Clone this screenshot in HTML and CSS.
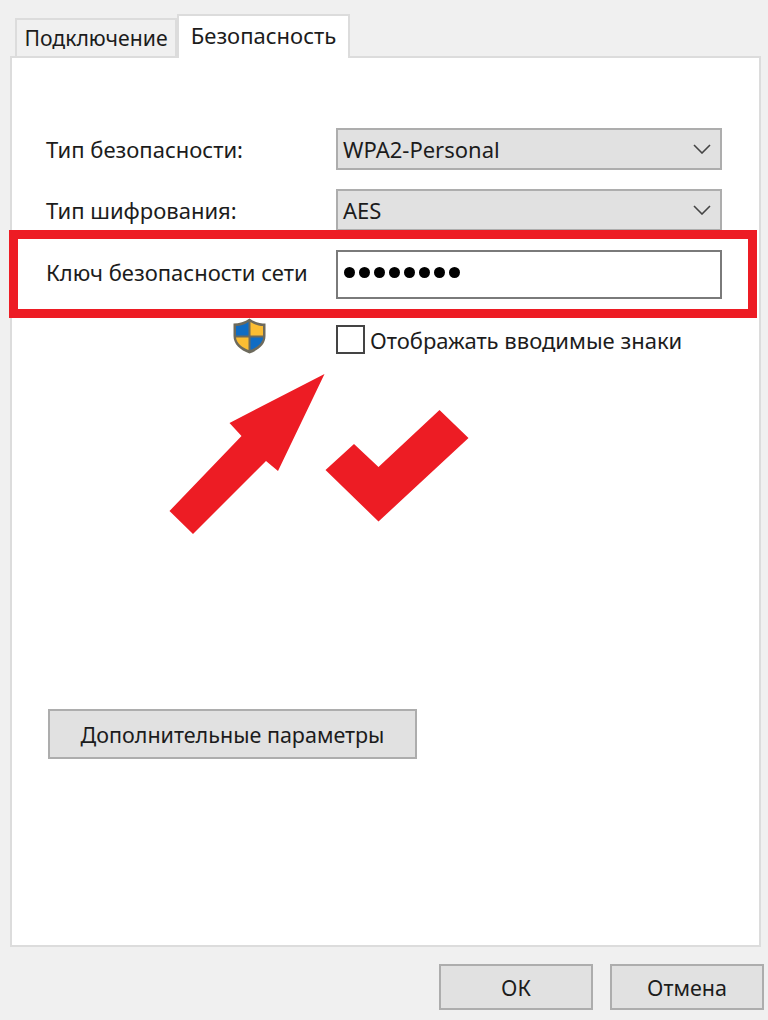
FILE: index.html
```html
<!DOCTYPE html>
<html lang="en">
<head>
    <meta charset="UTF-8">
    <meta name="viewport" content="width=device-width, initial-scale=1.0">
    <title>Безопасность</title>
    <link rel="stylesheet" href="styles.css">
</head>
<body>
    <div class="tabs">
        <div class="tab">Подключение</div>
        <div class="tab tab-active">Безопасность</div>
    </div>

    <div class="panel">
        <div class="form">
            <div class="row-label">Тип безопасности:</div>
            <div class="combo">
                <span>WPA2-Personal</span>
                <svg class="chevron" viewBox="0 0 18 10"><path d="M1 1l8 8 8-8" /></svg>
            </div>

            <div class="row-label">Тип шифрования:</div>
            <div class="combo">
                <span>AES</span>
                <svg class="chevron" viewBox="0 0 18 10"><path d="M1 1l8 8 8-8" /></svg>
            </div>

            <div class="row-label row-label-key">Ключ безопасности сети</div>
            <div class="key-field">
                <i></i><i></i><i></i><i></i><i></i><i></i><i></i><i></i>
            </div>

            <div class="shield-cell">
                <svg class="shield" viewBox="0 0 33 36">
                    <path d="M16.5 0.5C12 4 6 5.5 0.5 5.5V18C0.5 26 7 32 16.5 35.5C26 32 32.5 26 32.5 18V5.5C27 5.5 21 4 16.5 0.5Z" fill="#6d6a5c" />
                    <path d="M15.5 4C12 6.5 7 8 3 8V17.5H15.5Z" fill="#0f6cc4" />
                    <path d="M17.5 4C21 6.5 26 8 30 8V17.5H17.5Z" fill="#fbbd33" />
                    <path d="M3 19.5H15.5V32C9 29.5 3.5 25 3 19.5Z" fill="#fbbd33" />
                    <path d="M17.5 19.5H30C29.5 25 24 29.5 17.5 32Z" fill="#0f6cc4" />
                </svg>
            </div>
            <div class="check-row">
                <span class="checkbox"></span>
                <span>Отображать вводимые знаки</span>
            </div>
        </div>

        <button class="btn btn-advanced">Дополнительные параметры</button>
    </div>

    <div class="footer">
        <button class="btn btn-footer">ОК</button>
        <button class="btn btn-footer">Отмена</button>
    </div>

    <!-- red annotations drawn on top of the screenshot -->
    <div class="red-box"></div>
    <svg class="marks" viewBox="0 0 768 1020">
        <polygon points="324.5,374 229.5,423 241.5,436 169.5,511 193,534 266,461 278,471" />
        <polygon points="354,444 378.5,467 439.5,410 468.5,438 378.5,521.5 325.5,470" />
    </svg>
</body>
</html>
```

FILE: styles.css
```css
html, body {
    margin: 0;
    height: 100%;
}

body {
    position: relative;
    box-sizing: border-box;
    height: 1020px;
    padding: 14px 4px 0 10px;
    overflow: hidden;
    background-color: #f0f0f0;
    color: #1c1c1c;
    font-family: "Noto Sans", sans-serif;
    font-size: 22px;
}

.tabs {
    display: flex;
    align-items: flex-end;
    height: 42px;
    padding-left: 5px;
}

.tab {
    box-sizing: border-box;
    width: 162px;
    height: 38px;
    text-align: center;
    border: 2px solid #dcdcdc;
    border-bottom: 0;
    font-size: 21.2px;
    line-height: 36px;
}

.tab-active {
    position: relative;
    z-index: 1;
    width: 173px;
    height: 44px;
    margin-bottom: -2px;
    background-color: #fff;
    font-size: 22px;
    line-height: 38px;
}

.panel {
    box-sizing: border-box;
    width: 751px;
    height: 891px;
    padding: 70px 0 0 34px;
    background-color: #fff;
    border: 2px solid #dcdcdc;
}

.form {
    display: grid;
    grid-template-columns: 290px 386px;
    grid-template-rows: 42px 42px 49px 36px;
    row-gap: 19px;
}

.row-label {
    align-self: center;
}

.row-label-key {
    margin-top: -5px;
}

.combo {
    display: flex;
    align-items: center;
    justify-content: space-between;
    box-sizing: border-box;
    padding: 0 9px 0 5px;
    background-color: #e1e1e1;
    border: 2px solid #adadad;
}

.chevron {
    width: 18px;
    height: 10px;
    fill: none;
    stroke: #444;
    stroke-width: 1.6;
}

.key-field {
    display: flex;
    align-items: center;
    gap: 4px;
    box-sizing: border-box;
    padding: 0 0 5px 6px;
    background-color: #fff;
    border: 2px solid #7a7a7a;
}

.key-field i {
    width: 11px;
    height: 11px;
    background-color: #000;
    border-radius: 50%;
}

.shield-cell {
    padding-left: 187px;
}

.shield {
    display: block;
    width: 33px;
    height: 36px;
}

.check-row {
    display: flex;
    align-items: center;
    gap: 5px;
    margin-top: 7px;
}

.checkbox {
    box-sizing: border-box;
    width: 29px;
    height: 29px;
    background-color: #fff;
    border: 2px solid #444;
}

.btn {
    box-sizing: border-box;
    padding: 0;
    background-color: #e1e1e1;
    border: 2px solid #adadad;
    color: inherit;
    font: inherit;
    font-size: 21.5px;
}

.btn-advanced {
    display: block;
    width: 369px;
    height: 50px;
    margin: 355px 0 0 2px;
}

.footer {
    display: flex;
    justify-content: flex-end;
    gap: 17px;
    margin-top: 17px;
}

.btn-footer {
    width: 154px;
    height: 46px;
}

.red-box {
    position: absolute;
    left: 9px;
    top: 230px;
    box-sizing: border-box;
    width: 748px;
    height: 88px;
    border: 9px solid #ed1c24;
}

.marks {
    position: absolute;
    left: 0;
    top: 0;
    width: 768px;
    height: 1020px;
    fill: #ed1c24;
}
```
